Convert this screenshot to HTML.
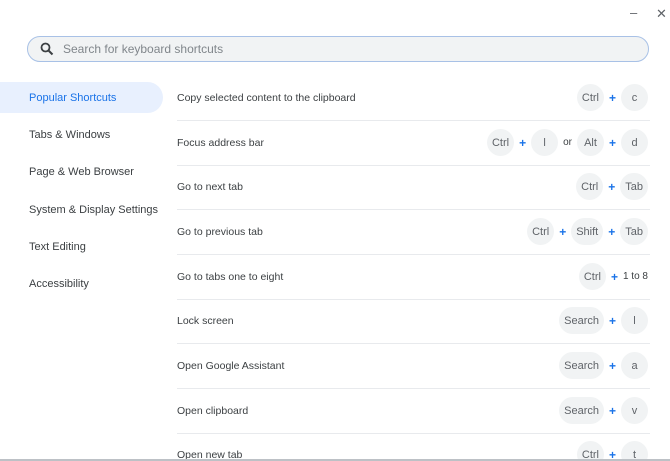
<!DOCTYPE html><html style="overflow:hidden;height:461px"><head><style>
body{margin:0;width:670px;height:461px;background:#fff;font-family:"Liberation Sans",sans-serif;position:relative;overflow:hidden;color:#3c4043}
.ctl{position:absolute;color:#5f6368;font-size:13px}
.search{position:absolute;left:27px;top:36px;width:620px;height:24px;border:1.5px solid #a8c1e6;border-radius:14px;background:#f1f3f4}
.search span{position:absolute;left:35px;top:5px;font-size:12px;color:#80868b}
.nav{position:absolute;left:29px;font-size:11px;color:#3c4043}
.hl{position:absolute;left:0;top:82px;width:163px;height:31px;background:#e8f0fe;border-radius:0 16px 16px 0}
.row{position:absolute;left:177px;width:473px;height:44px;border-bottom:1px solid #e8eaed;font-size:10.5px}
.row .t{position:absolute;left:0;top:16px}
.keys{position:absolute;right:2px;top:8px;display:flex;align-items:center;font-size:11px;color:#5f6368}
.k{height:27px;min-width:27px;padding:0 5px;box-sizing:border-box;border-radius:14px;background:#f1f3f4;display:flex;align-items:center;justify-content:center}
.p{color:#1a73e8;font-weight:bold;margin:0 5px;font-size:12px}
.o{margin:0 5px;font-size:10px;color:#3c4043}
</style></head><body>
<div class="ctl" style="left:630px;top:5px">–</div>
<div class="ctl" style="left:656px;top:6px;font-size:13px">✕</div>
<div class="search"><svg style="position:absolute;left:12px;top:5px" width="14" height="14" viewBox="0 0 14 14"><circle cx="5.5" cy="5.5" r="4" fill="none" stroke="#3c4043" stroke-width="1.8"/><path d="M8.5 8.5L12.5 12.5" stroke="#3c4043" stroke-width="2"/></svg><span>Search for keyboard shortcuts</span></div>
<div class="hl"></div>
<div class="nav" style="top:92px;color:#1a73e8">Popular Shortcuts</div>
<div class="nav" style="top:129px">Tabs &amp; Windows</div>
<div class="nav" style="top:166px">Page &amp; Web Browser</div>
<div class="nav" style="top:204px">System &amp; Display Settings</div>
<div class="nav" style="top:241px">Text Editing</div>
<div class="nav" style="top:278px">Accessibility</div>

<div class="row" style="top:76px"><div class="t">Copy selected content to the clipboard</div><div class="keys"><div class="k">Ctrl</div><span class="p">+</span><div class="k">c</div></div></div>
<div class="row" style="top:121px"><div class="t">Focus address bar</div><div class="keys"><div class="k">Ctrl</div><span class="p">+</span><div class="k">l</div><span class="o">or</span><div class="k">Alt</div><span class="p">+</span><div class="k">d</div></div></div>
<div class="row" style="top:165px"><div class="t">Go to next tab</div><div class="keys"><div class="k">Ctrl</div><span class="p">+</span><div class="k">Tab</div></div></div>
<div class="row" style="top:210px"><div class="t">Go to previous tab</div><div class="keys"><div class="k">Ctrl</div><span class="p">+</span><div class="k">Shift</div><span class="p">+</span><div class="k">Tab</div></div></div>
<div class="row" style="top:255px"><div class="t">Go to tabs one to eight</div><div class="keys"><div class="k">Ctrl</div><span class="p">+</span><span style="font-size:10px;color:#3c4043">1 to 8</span></div></div>
<div class="row" style="top:299px"><div class="t">Lock screen</div><div class="keys"><div class="k">Search</div><span class="p">+</span><div class="k">l</div></div></div>
<div class="row" style="top:344px"><div class="t">Open Google Assistant</div><div class="keys"><div class="k">Search</div><span class="p">+</span><div class="k">a</div></div></div>
<div class="row" style="top:389px"><div class="t">Open clipboard</div><div class="keys"><div class="k">Search</div><span class="p">+</span><div class="k">v</div></div></div>
<div class="row" style="top:433px"><div class="t">Open new tab</div><div class="keys"><div class="k">Ctrl</div><span class="p">+</span><div class="k">t</div></div></div>
<div style="position:absolute;left:0;top:459px;width:670px;height:2px;background:#bdc1c6"></div>
</body></html>
